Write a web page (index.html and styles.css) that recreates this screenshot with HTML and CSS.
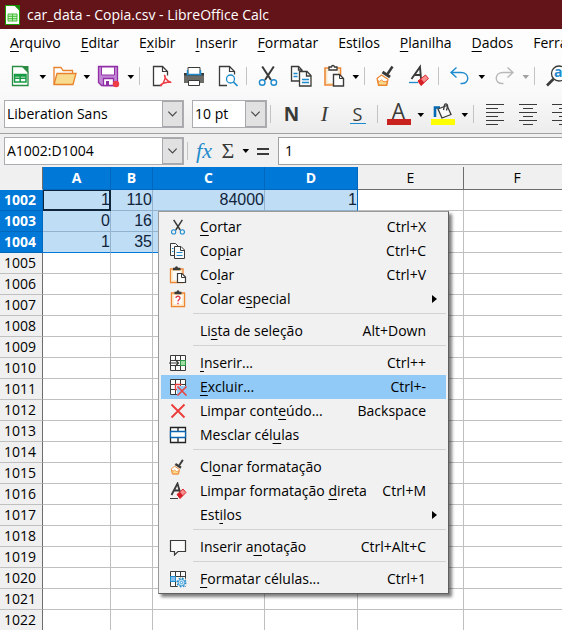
FILE: index.html
```html
<!DOCTYPE html>
<html lang="pt-BR">
<head>
<meta charset="utf-8">
<meta name="viewport" content="width=device-width, initial-scale=1">
<title>car_data - Copia.csv - LibreOffice Calc</title>
<link rel="stylesheet" href="styles.css">
</head>
<body>
<svg class="defs" aria-hidden="true">
  <symbol id="caret" viewBox="0 0 11 11"><path d="M2.5 4h6.6L5.8 8z" fill="currentColor"/></symbol>
  <symbol id="chevron" viewBox="0 0 20 26"><path d="M5.5 10.500l4.500 4.500 4.500-4.500" fill="none" stroke="#444" stroke-width="1.200"/></symbol>
  <symbol id="cut" viewBox="0 0 24 24"><g fill="none"><path d="M6.200 2.500L15 16M17.800 2.500L9 16" stroke="#3a3a38" stroke-width="2"/><g stroke="#1e8bcd" stroke-width="1.400"><circle cx="6.200" cy="18.500" r="2.800"/><circle cx="17.800" cy="18.500" r="2.800"/></g></g></symbol>
  <symbol id="copy" viewBox="0 0 24 24"><g fill="#fafafa" stroke="#3a3a38" stroke-width="1.300"><path d="M2.500 2.500h7l3.500 3.500v11H2.500z"/><path d="M9.500 2.500V6H13" fill="none"/><path d="M10.500 7.500h7.500l4 4v10.500H10.500z"/><path d="M17.500 7.500v4.500h4.500" fill="none"/></g><path d="M4.500 9.500h4M4.500 12.500h4M13 15.500h7M13 18.500h7" stroke="#1e8bcd" stroke-width="1.300"/></symbol>
  <symbol id="paste" viewBox="0 0 24 24"><path d="M3 4h15.500v17H3z" fill="#fafafa" stroke="#ed8733" stroke-width="1.600"/><path d="M4.800 6h12v13.500h-12z" fill="none" stroke="#fbdfae"/><path d="M7 3h2.500a1.500 1.500 0 0 1 3 0H15v3H7z" fill="#fff" stroke="#3a3a38" stroke-width="1.300"/><path d="M11.500 10.500h6l4 4v7.500h-10z" fill="#fff" stroke="#3a3a38" stroke-width="1.400"/><path d="M17.500 10.500v4h4" fill="none" stroke="#3a3a38"/></symbol>
  <symbol id="paste-small" viewBox="0 0 18 18"><path d="M1.500 3h12.500v13.500H1.500z" fill="#fafafa" stroke="#ed8733" stroke-width="1.300"/><path d="M3 4.500h9.500V15H3z" fill="none" stroke="#fbdfae"/><path d="M4 1.800h2a1.500 1.500 0 0 1 3 0h2.500v2.400H4z" fill="#3a3a38"/><path d="M8.500 7.500h4.500l3.500 3.500v5.500h-8z" fill="#fff" stroke="#3a3a38" stroke-width="1.200"/><path d="M12.500 7.500v4h4" fill="none" stroke="#3a3a38"/></symbol>
  <symbol id="copy-small" viewBox="0 0 18 18"><g fill="#fafafa" stroke="#3a3a38"><path d="M1.500 1.500h5l3 3v9h-8z"/><path d="M5.500 4.500h6.500l3.500 3.500v8.500H5.500z"/><path d="M11.500 4.500V8.500H15.500" fill="none"/></g><path d="M3 6.500h1.500M3 9.500h1.500M7.500 10.500h6M7.500 13.500h6" stroke="#1e8bcd"/></symbol>
  <symbol id="brush" viewBox="0 0 24 24"><path d="M18.500 2.500L13.500 10" stroke="#3a3a38" stroke-width="2.500"/><path d="M8.500 8l7.500 5" stroke="#3a3a38" stroke-width="3"/><path d="M7.500 11l6.500 4.300-1.200 6.200H4.500L3 14.500z" fill="#fff" stroke="#ed8733" stroke-width="1.200"/><path d="M3.500 16l2 1.500 2-1.500 2.500 2 3-1-.5 4H5z" fill="#f8db8f" stroke="#ed8733"/></symbol>
  <symbol id="clearfmt" viewBox="0 0 24 24"><path d="M4.500 15L13 3l1 12M8 11h5.500" fill="none" stroke="#3a3a38" stroke-width="1.900"/><path d="M2 18.500h9" stroke="#1e8bcd" stroke-width="1.300"/><path d="M11 17l7.500-6 3 3.500L14 21.500z" fill="#f78f8f" stroke="#e0242b"/><path d="M11 17l3-2.300 3.300 4-3.300 2.800z" fill="#d52027"/></symbol>
  <symbol id="clearfmt-small" viewBox="0 0 18 18"><path d="M2.500 13L8.500 1.500 11 10M5 8.500h5" fill="none" stroke="#3a3a38" stroke-width="1.800"/><path d="M1 16.500h8" stroke="#3a3a38"/><path d="M8 12.500l6-5.500 3 3.500-6 6z" fill="#f78f8f" stroke="#e0242b"/><path d="M8 12.500l3-2.500 3 3.500-3 3z" fill="#d52027"/></symbol>
  <symbol id="undo" viewBox="0 0 24 24"><path d="M8.500 3.500L3 8.500l5.500 5M3 8.500h10c9 0 8.500 11 1.500 11H12.500" fill="none" stroke="currentColor" stroke-width="1.400"/></symbol>
  <symbol id="grid" viewBox="0 0 18 18"><path d="M1.500 1.500h15v15h-15zM1.500 6.500h15M1.500 11.500h15M6.500 1.500v15M11.500 1.500v15" fill="#fafafa" stroke="#3a3a38"/></symbol>
</svg>

<header class="titlebar">
  <svg class="app-icon" viewBox="0 0 15 20" aria-hidden="true"><path d="M.5.5h9.500l4.500 4.500v14.500H.5z" fill="#fff" stroke="#18a303"/><path d="M9 0h6v6z" fill="#138c08"/><path d="M3 9h9v7H3zM3 11.300h9M3 13.700h9M7.500 9v7" fill="#ccf4c6" stroke="#43b936"/></svg>
  <h1>car_data - Copia.csv - LibreOffice Calc</h1>
</header>

<nav class="menubar" aria-label="Menu principal">
  <button><u>A</u>rquivo</button><button><u>E</u>ditar</button><button>E<u>x</u>ibir</button><button><u>I</u>nserir</button><button><u>F</u>ormatar</button><button>Est<u>i</u>los</button><button><u>P</u>lanilha</button><button><u>D</u>ados</button><button>Ferramentas</button>
</nav>

<div class="bars">
<div class="toolbar" role="toolbar" aria-label="Padrão">
  <button class="tool" aria-label="Novo"><svg viewBox="0 0 24 24"><path d="M3.500 2.500h10l5.500 5.500v13.500H3.500z" fill="#fff" stroke="#2a8c42" stroke-width="1.300"/><path d="M12.500 2H19.500v7z" fill="#2a8c42"/><path d="M5.500 10.500h11.500v7.500H5.500zM5.500 14.200h11.500M11.200 12.500v5.500M5.500 12h11.500" fill="#fff" stroke="#169b43" stroke-width="1.500"/></svg></button>
  <button class="drop" aria-label="Opções de Novo"><svg><use href="#caret"/></svg></button>
  <button class="tool" aria-label="Abrir"><svg viewBox="0 0 24 24"><path d="M1 20V3.500h7l2 3h9.500v3" fill="#fff" stroke="#e8832c" stroke-width="1.300"/><path d="M1 20.500L4 9.500h19l-3 11z" fill="#f8db8f" stroke="#e8832c" stroke-width="1.300"/></svg></button>
  <button class="drop" aria-label="Opções de Abrir"><svg><use href="#caret"/></svg></button>
  <button class="tool" aria-label="Salvar"><svg viewBox="0 0 24 24"><path d="M1.500 2.500h19v19H4.500l-3-3z" fill="#c187d6" stroke="#922fa5" stroke-width="1.300"/><path d="M4.500 3h13v8h-13z" fill="#fff" stroke="#922fa5"/><path d="M6.500 14.500h10v7h-10z" fill="#fff" stroke="#922fa5" stroke-width="1.300"/><path d="M9 17h3v4.500H9z" fill="#922fa5"/><circle cx="19" cy="20" r="3.200" fill="#ef3b45"/></svg></button>
  <button class="drop" aria-label="Opções de Salvar"><svg><use href="#caret"/></svg></button>
  <span class="sep"></span>
  <button class="tool" aria-label="Exportar como PDF"><svg viewBox="0 0 24 24"><path d="M12.500 21.500H4.500v-19h9l5 5v4" fill="#fff" stroke="#3a3a38" stroke-width="1.300"/><path d="M13.500 2.500v5h5" fill="none" stroke="#3a3a38" stroke-width="1.200"/><path d="M15.500 11.500c2 0-.5 8-3.500 10-1.500.5 0-3 9.500-3.500 2 1.500-5.500-1.500-6-6.500z" fill="none" stroke="#ee3d45" stroke-width="1.400"/></svg></button>
  <button class="tool" aria-label="Imprimir"><svg viewBox="0 0 24 24"><path d="M2 9.500h3.500V7.500h13v2H22v9.500H2z" fill="#6b6b68"/><path d="M2 9h20v2.500H2z" fill="#3a3a38"/><path d="M6 10.500V3.500h12v7z" fill="#fff" stroke="#3a3a38"/><path d="M4.500 10.500h15M5.500 10V6M18.500 10V6" stroke="#1e8bcd" stroke-width="1.400"/><path d="M6.500 16.500h11v5h-11z" fill="#fff" stroke="#3a3a38"/></svg></button>
  <button class="tool" aria-label="Visualizar impressão"><svg viewBox="0 0 24 24"><path d="M12 21.500H4.500v-19h10l5 5v3" fill="#fff" stroke="#3a3a38" stroke-width="1.300"/><path d="M14.500 2.500v5h5" fill="none" stroke="#3a3a38" stroke-width="1.200"/><circle cx="15.500" cy="15" r="4" fill="#fff" stroke="#1e8bcd" stroke-width="1.300"/><path d="M18.500 18l4 4" stroke="#1e8bcd" stroke-width="1.700"/></svg></button>
  <span class="sep"></span>
  <button class="tool" aria-label="Cortar"><svg><use href="#cut"/></svg></button>
  <button class="tool" aria-label="Copiar"><svg><use href="#copy"/></svg></button>
  <button class="tool" aria-label="Colar"><svg><use href="#paste"/></svg></button>
  <button class="drop" aria-label="Opções de Colar"><svg><use href="#caret"/></svg></button>
  <span class="sep"></span>
  <button class="tool" aria-label="Clonar formatação"><svg><use href="#brush"/></svg></button>
  <button class="tool" aria-label="Limpar formatação direta"><svg><use href="#clearfmt"/></svg></button>
  <span class="sep"></span>
  <button class="tool undo" aria-label="Desfazer"><svg><use href="#undo"/></svg></button>
  <button class="drop" aria-label="Opções de Desfazer"><svg><use href="#caret"/></svg></button>
  <button class="tool redo" aria-label="Refazer"><svg><use href="#undo"/></svg></button>
  <button class="drop off" aria-label="Opções de Refazer"><svg><use href="#caret"/></svg></button>
  <span class="sep"></span>
  <button class="tool" aria-label="Localizar e substituir"><svg viewBox="0 0 24 24"><circle cx="15" cy="9.500" r="7.500" fill="#fff" stroke="#3a3a38" stroke-width="1.300"/><path d="M9.500 15L3 21.500" stroke="#3a3a38" stroke-width="2.600"/><text class="find-text" x="10" y="13">a</text></svg></button>
</div>

<div class="toolbar format" role="toolbar" aria-label="Formatação">
  <span class="combo wide"><select aria-label="Nome da fonte"><option>Liberation Sans</option></select><svg aria-hidden="true"><use href="#chevron"/></svg></span>
  <span class="combo size"><select aria-label="Tamanho da fonte"><option>10 pt</option></select><svg aria-hidden="true"><use href="#chevron"/></svg></span>
  <span class="sep"></span>
  <button class="tool letter bold" aria-label="Negrito">N</button>
  <button class="tool letter italic" aria-label="Itálico">I</button>
  <button class="tool letter under" aria-label="Sublinhado"><span>S</span></button>
  <span class="sep"></span>
  <button class="tool color red" aria-label="Cor da fonte"><span>A</span></button>
  <button class="drop" aria-label="Opções de cor da fonte"><svg><use href="#caret"/></svg></button>
  <button class="tool color yellow" aria-label="Cor de fundo"><svg viewBox="0 0 24 16"><path d="M4 14V4.500h5" fill="none" stroke="#0369b0" stroke-width="2.600"/><path d="M7 6l9-3.500 4 9-9 3.500z" fill="#fafafa" stroke="#3a3a38" stroke-width="1.300"/><path d="M12.500 7l1-5c1-2 3.500-1 3 1.500l-1 4" fill="none" stroke="#3a3a38" stroke-width="1.300"/></svg></button>
  <button class="drop" aria-label="Opções de cor de fundo"><svg><use href="#caret"/></svg></button>
  <span class="sep"></span>
  <button class="tool" aria-label="Alinhar à esquerda"><svg class="lines" viewBox="0 0 24 24"><path d="M3 2.500h18M3 6.500h12M3 10.500h18M3 14.500h12M3 18.500h18M3 22.500h12"/></svg></button>
  <button class="tool" aria-label="Centralizar"><svg class="lines" viewBox="0 0 24 24"><path d="M3 2.500h18M7 6.500h10M3 10.500h18M7 14.500h10M3 18.500h18M7 22.500h10"/></svg></button>
  <button class="tool" aria-label="Alinhar à direita"><svg class="lines" viewBox="0 0 24 24"><path d="M3 2.500h18M10 6.500h11M3 10.500h18M10 14.500h11M3 18.500h18M10 22.500h11"/></svg></button>
</div>
</div>

<div class="formula">
  <span class="combo wide"><input aria-label="Caixa de nome" value="A1002:D1004"><svg aria-hidden="true"><use href="#chevron"/></svg></span>
  <span class="sep"></span>
  <button class="small fx" aria-label="Assistente de funções">fx</button>
  <button class="small sigma" aria-label="Selecionar função">Σ</button>
  <button class="drop" aria-label="Opções de função"><svg><use href="#caret"/></svg></button>
  <button class="small" aria-label="Fórmula"><svg viewBox="0 0 24 24"><path d="M6 10h12M6 15h12" stroke="#3a3a38" stroke-width="2"/></svg></button>
  <input class="line" aria-label="Linha de entrada" value="1">
</div>

<main class="sheet">
<table>
  <colgroup><col class="c-row"><col class="c-a"><col class="c-b"><col class="c-c"><col class="c-d"><col class="c-e"><col class="c-f"></colgroup>
  <thead><tr><td class="corner"></td><th class="on">A</th><th class="on">B</th><th class="on">C</th><th class="on">D</th><th>E</th><th>F</th></tr></thead>
  <tbody>
  <tr class="sel"><th>1002</th><td class="cursor">1</td><td>110</td><td>84000</td><td>1</td><td></td><td></td></tr>
  <tr class="sel"><th>1003</th><td>0</td><td>16</td><td></td><td></td><td></td><td></td></tr>
  <tr class="sel last"><th>1004</th><td>1</td><td>35</td><td></td><td></td><td></td><td></td></tr>
  <tr><th>1005</th><td></td><td></td><td></td><td></td><td></td><td></td></tr>
  <tr><th>1006</th><td></td><td></td><td></td><td></td><td></td><td></td></tr>
  <tr><th>1007</th><td></td><td></td><td></td><td></td><td></td><td></td></tr>
  <tr><th>1008</th><td></td><td></td><td></td><td></td><td></td><td></td></tr>
  <tr><th>1009</th><td></td><td></td><td></td><td></td><td></td><td></td></tr>
  <tr><th>1010</th><td></td><td></td><td></td><td></td><td></td><td></td></tr>
  <tr><th>1011</th><td></td><td></td><td></td><td></td><td></td><td></td></tr>
  <tr><th>1012</th><td></td><td></td><td></td><td></td><td></td><td></td></tr>
  <tr><th>1013</th><td></td><td></td><td></td><td></td><td></td><td></td></tr>
  <tr><th>1014</th><td></td><td></td><td></td><td></td><td></td><td></td></tr>
  <tr><th>1015</th><td></td><td></td><td></td><td></td><td></td><td></td></tr>
  <tr><th>1016</th><td></td><td></td><td></td><td></td><td></td><td></td></tr>
  <tr><th>1017</th><td></td><td></td><td></td><td></td><td></td><td></td></tr>
  <tr><th>1018</th><td></td><td></td><td></td><td></td><td></td><td></td></tr>
  <tr><th>1019</th><td></td><td></td><td></td><td></td><td></td><td></td></tr>
  <tr><th>1020</th><td></td><td></td><td></td><td></td><td></td><td></td></tr>
  <tr><th>1021</th><td></td><td></td><td></td><td></td><td></td><td></td></tr>
  <tr><th>1022</th><td></td><td></td><td></td><td></td><td></td><td></td></tr>
  </tbody>
</table>

<div class="context" role="menu">
  <button role="menuitem"><svg><use href="#cut"/></svg><span><u>C</u>ortar</span><kbd>Ctrl+X</kbd></button>
  <button role="menuitem"><svg><use href="#copy-small"/></svg><span>Cop<u>i</u>ar</span><kbd>Ctrl+C</kbd></button>
  <button role="menuitem"><svg><use href="#paste-small"/></svg><span>Co<u>l</u>ar</span><kbd>Ctrl+V</kbd></button>
  <button role="menuitem"><svg viewBox="0 0 18 18"><path d="M2.500 3h13v13.500h-13z" fill="#fff" stroke="#ed8733" stroke-width="1.400"/><path d="M4 4.500h10v10.500H4z" fill="none" stroke="#fbdfae"/><path d="M5.500 1.800h2a1.500 1.500 0 0 1 3 0h2v2.400h-7z" fill="#3a3a38"/><path d="M7 8c0-2.500 4.200-2.200 4 .2C10.800 9.500 9 9.800 9 11.500M9 12.800v1.500" fill="none" stroke="#e33b45" stroke-width="1.300"/></svg><span>Colar e<u>s</u>pecial</span><i class="arrow"></i></button>
  <hr>
  <button role="menuitem"><svg></svg><span>Li<u>s</u>ta de seleção</span><kbd>Alt+Down</kbd></button>
  <hr>
  <button role="menuitem"><svg viewBox="0 0 18 18"><use href="#grid"/><path d="M2 7h9v4H2z" fill="#fafafa"/><path d="M0 9h9M6 5.500L9.500 9 6 12.500" fill="none" stroke="#3a3a38" stroke-width="1.200"/><path d="M11.500 6.500h5v5h-5z" fill="#a1dca5" stroke="#2c9b47"/></svg><span><u>I</u>nserir...</span><kbd>Ctrl++</kbd></button>
  <button role="menuitem" class="active"><svg viewBox="0 0 18 18"><use href="#grid"/><path d="M8 8h10v10H8z" fill="#91c9f7"/><path d="M12 7v-.5H6.500v5H8" fill="none" stroke="#ed3d3b" stroke-width="1.300"/><path d="M8.500 8.500l9 9M17.500 8.500l-9 9" stroke="#ed3d3b" stroke-width="1.500"/></svg><span><u>E</u>xcluir...</span><kbd>Ctrl+-</kbd></button>
  <button role="menuitem"><svg viewBox="0 0 18 18"><path d="M2.500 2.500l13 13M15.500 2.500l-13 13" stroke="#ed3d3b" stroke-width="1.900"/></svg><span>Limpar cont<u>e</u>údo...</span><kbd>Backspace</kbd></button>
  <button role="menuitem"><svg viewBox="0 0 18 18"><path d="M1.500 1.500h15v15h-15zM9 1.500v5M9 11.500v5" fill="#fff" stroke="#222" stroke-width="1.300"/><path d="M1.500 5.500h15v6h-15z" fill="#fff" stroke="#0a64b0" stroke-width="1.300"/></svg><span>Mesclar cél<u>u</u>las</span></button>
  <hr>
  <button role="menuitem"><svg><use href="#brush"/></svg><span>Cl<u>o</u>nar formatação</span></button>
  <button role="menuitem"><svg><use href="#clearfmt-small"/></svg><span>Limpar formatação <u>d</u>ireta</span><kbd>Ctrl+M</kbd></button>
  <button role="menuitem"><svg></svg><span>Est<u>i</u>los</span><i class="arrow"></i></button>
  <hr>
  <button role="menuitem"><svg viewBox="0 0 18 18"><path d="M1.500 2.500h15v11H9l-3.500 3.500v-3.500h-4z" fill="#fafafa" stroke="#3a3a38" stroke-width="1.200"/></svg><span>Inserir a<u>n</u>otação</span><kbd>Ctrl+Alt+C</kbd></button>
  <hr>
  <button role="menuitem"><svg viewBox="0 0 18 18"><use href="#grid"/><path d="M1.500 6.500h5v5h-5z" fill="#83beec" stroke="#1e8bcd"/><circle cx="12.500" cy="12.500" r="5.500" fill="#f1f1f1"/><circle cx="12.500" cy="12.500" r="4.300" fill="none" stroke="#1e8bcd" stroke-width="1.400" stroke-dasharray="1.700 1.677"/><circle cx="12.500" cy="12.500" r="3.300" fill="#cce5f6" stroke="#1e8bcd" stroke-width=".8"/><circle cx="12.500" cy="12.500" r="1.200" fill="#fff" stroke="#1e8bcd" stroke-width=".8"/></svg><span><u>F</u>ormatar células...</span><kbd>Ctrl+1</kbd></button>
</div>
</main>
</body>
</html>
```
FILE: styles.css
```css
* { box-sizing: border-box; }

body {
  margin: 0;
  height: 100vh;
  display: flex;
  flex-direction: column;
  overflow: hidden;
  background: #f0f0f0;
  color: #000;
  font: 14px/20px "Open Sans", "Noto Sans", sans-serif;
}

.defs { position: absolute; width: 0; height: 0; }

button {
  display: flex;
  align-items: center;
  justify-content: center;
  flex: none;
  margin: 0;
  padding: 0;
  border: 0;
  background: none;
  color: inherit;
  font: inherit;
  white-space: nowrap;
}

u { text-underline-offset: 3px; text-decoration-skip-ink: none; }

.titlebar {
  flex: none;
  display: flex;
  align-items: center;
  gap: 7px;
  height: 29px;
  padding-left: 5px;
  background: #621418;
  color: #fff;
}
.titlebar h1 { margin: 0; font-size: 14px; font-weight: 400; white-space: nowrap; }
.app-icon { width: 15px; height: 20px; }

.menubar {
  flex: none;
  display: flex;
  gap: 20px;
  height: 28px;
  padding-left: 10px;
  overflow: hidden;
  background: #fdfdfd;
}

.bars {
  flex: none;
  border-bottom: 1px solid #a0a0a0;
  background: linear-gradient(#fdfdfd, #f9f9f9 50%, #ececec);
}
.toolbar {
  display: flex;
  align-items: center;
  height: 38px;
  padding-left: 4px;
  overflow: hidden;
}

.tool { width: 33px; height: 28px; }
.tool svg { width: 24px; height: 24px; }
.drop { width: 11px; height: 28px; }
.drop svg { width: 11px; height: 11px; }
.off { color: #a0a0a0; }
.undo { color: #1e8bcd; }
.redo { color: #b8b8b8; }
.redo svg { transform: scaleX(-1); }
.sep {
  flex: none;
  width: 8px;
  height: 18px;
  background: linear-gradient(#c3c3c3, #c3c3c3) 3px 0 / 1px 100% no-repeat;
}
.find-text { font: 700 14px "Open Sans", sans-serif; fill: #1e8bcd; }

.combo {
  flex: none;
  position: relative;
  display: flex;
  height: 28px;
  border: 1px solid #acacb0;
  background: #fff;
}
.combo select, .combo input {
  flex: 1;
  min-width: 0;
  margin: 0;
  padding: 0 20px 0 2px;
  border: 0;
  outline: 0;
  appearance: none;
  background: none;
  color: #000;
  font: inherit;
}
.combo svg {
  position: absolute;
  top: 0;
  right: 0;
  width: 21px;
  height: 26px;
  border: 1px solid #a8a8ac;
  background: #e1e1e1;
  pointer-events: none;
}
.wide { width: 180px; }
.size { width: 75px; margin-left: 8px; }

.letter { color: #3a3a38; font-size: 19px; }
.bold { font-weight: 700; }
.italic { font-family: "Liberation Serif", serif; font-style: italic; font-size: 22px; }
.under { font-size: 18px; font-weight: 500; }
.under span { width: 16px; line-height: 18px; border-bottom: 1px solid #1e8bcd; }
.color {
  flex-direction: column;
  color: #3a3a38;
  font-size: 21px;
  line-height: 16px;
}
.color::after { content: ""; width: 24px; height: 6px; background: #c9211e; }
.color svg { height: 16px; }
.color.yellow::after { background: #ff0; }
.lines { fill: none; stroke: #3a3a38; }

.formula {
  flex: none;
  display: flex;
  align-items: center;
  height: 33px;
  padding-left: 4px;
}
.small { width: 24px; height: 26px; }
.small svg { width: 24px; height: 24px; }
.fx { color: #1e8bcd; font: italic 22px "Liberation Serif", serif; }
.sigma { color: #3a3a38; font: 22px "Liberation Serif", serif; }
.line {
  flex: 1;
  min-width: 0;
  height: 28px;
  margin-left: 3px;
  padding: 0 6px;
  border: 1px solid #a0a0a0;
  border-right: 0;
  outline: 0;
  background: #fff;
  font: inherit;
}

.sheet { flex: 1; position: relative; min-height: 0; }
.sheet::before {
  content: "";
  position: absolute;
  inset: 0;
  z-index: -1;
  background: #fff;
}
table {
  width: 571px;
  table-layout: fixed;
  border-collapse: separate;
  border-spacing: 0;
}
.c-row { width: 43px; }
.c-a { width: 68px; }
.c-b { width: 42px; }
.c-c { width: 112px; }
.c-d { width: 93px; }
.c-e { width: 106px; }
.c-f { width: 107px; }
th, td {
  height: 21px;
  padding: 0;
  overflow: hidden;
  border: 0 solid #c0c0c0;
  border-width: 0 1px 1px 0;
  line-height: 20px;
}
th { background: #f0f0f0; font-weight: 400; }
td { text-align: right; font-family: "Liberation Sans", sans-serif; font-size: 16px; }
thead th, thead td { height: 23px; border-color: #6d6d6d; }
thead .on { border-color: #0067bd; }
thead .corner { background: #f0f0f0; border-bottom-color: #f0f0f0; }
tbody th { padding-right: 2px; border-right-color: #6d6d6d; }
.on, .sel th { background: #0078d7; color: #fff; font-weight: 700; }
.sel th { border-color: #0067bd; }
.sel td { color: #10243a; }
.sel td:nth-child(-n+5) { background: #bfddf5; border-color: #93b2ce; }
.sel td:nth-child(5) { border-right-color: #0067bd; }
.last td:nth-child(-n+5) { border-bottom-color: #0078d7; }
.sel td.cursor { border-color: #10243a; box-shadow: inset 1px 1px #10243a, inset 0 0 0 1px #10243a; }

.context {
  position: absolute;
  top: 44px;
  left: 158px;
  width: 291px;
  padding: 3px 2px 2px;
  border: 1px solid #9a9a9a;
  border-right-color: #5f5f5f;
  border-bottom-color: #5f5f5f;
  background: #f1f1f1;
  box-shadow: 3px 3px 3px #00000080;
}
.context button {
  width: 100%;
  height: 24px;
  padding: 0 20px 0 8px;
  justify-content: flex-start;
}
.context svg { flex: none; width: 18px; height: 18px; margin-right: 13px; }
.context kbd { margin-left: auto; font: inherit; }
.context hr {
  height: 1px;
  margin: 2px 0 5px 32px;
  border: 0;
  background: #d2d2d2;
}
.context .active { background: #91c9f7; }
.arrow {
  width: 0;
  height: 0;
  margin: 0 -11px 0 auto;
  border: 4px solid transparent;
  border-left: 5px solid #000;
  border-right: 0;
}
```
